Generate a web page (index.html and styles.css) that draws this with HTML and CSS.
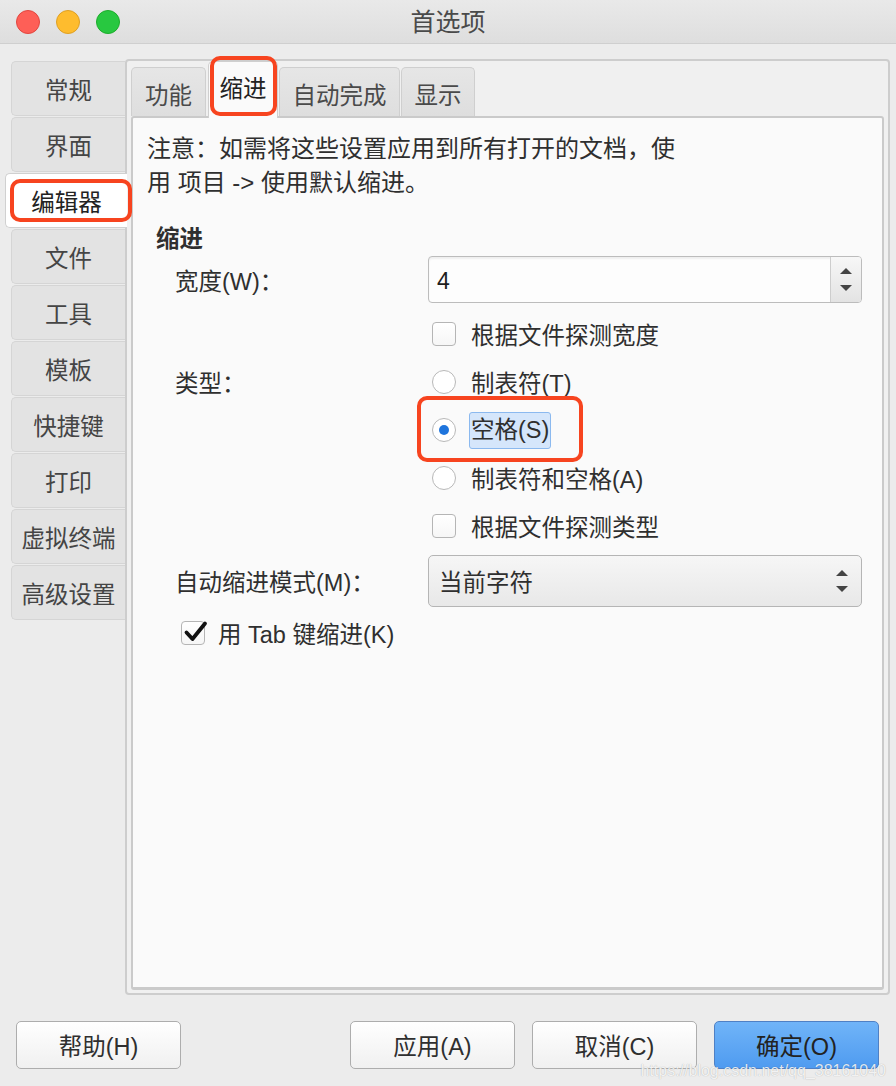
FILE: index.html
```html
<!DOCTYPE html>
<html lang="zh-CN">
<head>
<meta charset="utf-8">
<title>首选项</title>
<link rel="stylesheet" href="styles.css">
</head>
<body>
<div class="window">
  <header class="titlebar">
    <div class="lights">
      <span class="light red"></span><span class="light yellow"></span><span class="light green"></span>
    </div>
    <div class="title">首选项</div>
    <div></div>
  </header>

  <div class="main">
    <nav class="sidebar">
      <div class="stab">常规</div>
      <div class="stab">界面</div>
      <div class="stab active">编辑器<span class="mark mark-side"></span></div>
      <div class="stab">文件</div>
      <div class="stab">工具</div>
      <div class="stab">模板</div>
      <div class="stab">快捷键</div>
      <div class="stab">打印</div>
      <div class="stab">虚拟终端</div>
      <div class="stab">高级设置</div>
    </nav>

    <section class="pane">
      <div class="tabs">
        <div class="tab t-func">功能</div>
        <div class="tab t-indent active">缩进<span class="mark mark-tab"></span></div>
        <div class="tab t-auto">自动完成</div>
        <div class="tab t-show">显示</div>
      </div>
      <div class="page">
        <p class="note">注意：如需将这些设置应用到所有打开的文档，使<br>用 项目 -&gt; 使用默认缩进。</p>
        <div class="group-title">缩进</div>
        <div class="form">
          <div class="row row-spin">
            <div class="lbl">宽度(W)：</div>
            <div class="spin">
              <div class="spin-value">4</div>
              <div class="spin-btns"><span class="arr-up"></span><span class="arr-down"></span></div>
            </div>
          </div>
          <div class="row">
            <div class="lbl"></div>
            <div class="field"><span class="check"></span><span class="ctext">根据文件探测宽度</span></div>
          </div>
          <div class="row">
            <div class="lbl">类型：</div>
            <div class="field"><span class="radio"></span><span class="ctext">制表符(T)</span></div>
          </div>
          <div class="row">
            <div class="lbl"></div>
            <div class="field field-focus"><span class="radio on"></span><span class="ctext sel">空格(S)</span><span class="mark mark-radio"></span></div>
          </div>
          <div class="row">
            <div class="lbl"></div>
            <div class="field"><span class="radio"></span><span class="ctext">制表符和空格(A)</span></div>
          </div>
          <div class="row">
            <div class="lbl"></div>
            <div class="field"><span class="check"></span><span class="ctext">根据文件探测类型</span></div>
          </div>
          <div class="row row-combo">
            <div class="lbl">自动缩进模式(M)：</div>
            <div class="combo">
              <span class="combo-text">当前字符</span>
              <span class="combo-arrows"><span class="arr-up"></span><span class="arr-down"></span></span>
            </div>
          </div>
          <div class="row row-tab">
            <span class="check checked"><svg viewBox="0 0 26 26" width="26" height="26"><path d="M4.5 13.5 L10.5 20 L23 4.5" fill="none" stroke="#111" stroke-width="3.8" stroke-linecap="round" stroke-linejoin="round"/></svg></span>
            <span class="ctext tabtext">用 Tab 键缩进(K)</span>
          </div>
        </div>
      </div>
    </section>
  </div>

  <footer class="buttons">
    <button class="btn">帮助(H)</button>
    <button class="btn push">应用(A)</button>
    <button class="btn">取消(C)</button>
    <button class="btn primary">确定(O)</button>
  </footer>

  <div class="watermark">https://blog.csdn.net/qq_38161040</div>
</div>
</body>
</html>
```

FILE: styles.css
```css
* { box-sizing: border-box; }
html, body {
  margin: 0;
  padding: 0;
  background: #ececec;
}
body {
  font-family: "Liberation Sans", "Noto Sans CJK SC", sans-serif;
  color: #2f2f2f;
}
.window {
  position: relative;
  width: 896px;
  height: 1086px;
  background: #ececec;
  overflow: hidden;
}

/* title bar */
.titlebar {
  height: 44px;
  display: grid;
  grid-template-columns: 1fr auto 1fr;
  align-items: center;
  background: linear-gradient(#e9e9e9, #dedede);
  border-bottom: 1px solid #cfcfcf;
}
.lights {
  display: flex;
  gap: 16px;
  padding-left: 16px;
}
.light {
  width: 24px;
  height: 24px;
  border-radius: 50%;
  display: block;
}
.red { background: #fe5f57; border: 1px solid #e2463f; }
.yellow { background: #febc2e; border: 1px solid #dfa023; }
.green { background: #28c840; border: 1px solid #1dad2b; }
.title {
  font-size: 25px;
  color: #4a4a4a;
  line-height: 44px;
}

/* main */
.main {
  display: flex;
  padding: 15px 6px 0 11px;
  height: 951px;
}
.sidebar {
  width: 114px;
  flex: none;
  padding-top: 2px;
  display: flex;
  flex-direction: column;
  gap: 1px;
}
.stab {
  position: relative;
  height: 55px;
  background: #e3e3e3;
  border: 1px solid #d5d5d5;
  border-right: none;
  border-radius: 5px 0 0 5px;
  display: flex;
  align-items: center;
  justify-content: center;
  font-size: 23.5px;
  color: #454545;
}
.stab.active {
  background: #ffffff;
  margin-left: -6px;
  margin-right: -2px;
  z-index: 2;
  color: #222;
  border-color: #d0d0d0;
}

.mark {
  position: absolute;
  border: 4px solid #f7441f;
  border-radius: 10px;
  pointer-events: none;
  z-index: 5;
}
.mark-side { left: 4px; top: 5px; width: 122px; height: 43px; }
.mark-tab { left: 1px; top: -6px; width: 67px; height: 60px; }
.mark-radio { left: -11px; top: -10px; width: 166px; height: 66px; }

/* pane */
.pane {
  flex: 1;
  height: 936px;
  border: 2px solid #cdcdcd;
  border-radius: 4px;
  background: #f0f0f0;
  padding: 6px 4px 3px 4px;
  display: flex;
  flex-direction: column;
}
.tabs {
  display: flex;
  align-items: flex-end;
  gap: 2px;
  height: 49px;
  flex: none;
}
.tab {
  position: relative;
  height: 49px;
  background: linear-gradient(#e6e6e6, #dedede);
  border: 1px solid #cfcfcf;
  border-bottom: none;
  border-radius: 5px 5px 0 0;
  display: flex;
  align-items: center;
  justify-content: center;
  padding-top: 3px;
  font-size: 23.5px;
  color: #4a4a4a;
}
.t-func { width: 75px; }
.t-indent { width: 70px; }
.t-auto { width: 121px; margin-left: -1px; }
.t-show { width: 74px; margin-left: -1px; }
.tab.active {
  height: 57px;
  margin-bottom: -2px;
  background: #fafafa;
  z-index: 2;
  padding-top: 0;
  padding-bottom: 6px;
  color: #222;
}
.page {
  flex: 1;
  background: #fafafa;
  border: 2px solid #cacaca;
  border-bottom-width: 3px;
  border-radius: 3px;
  padding: 14px 0 0 14px;
}
.note {
  margin: 0;
  font-size: 24px;
  line-height: 34px;
}
.group-title {
  margin-top: 22px;
  margin-bottom: -2px;
  padding-left: 9px;
  font-size: 23.5px;
  line-height: 34px;
  font-weight: 700;
}
.form {
  padding-left: 28px;
  display: flex;
  flex-direction: column;
}
.row {
  display: flex;
  align-items: center;
  height: 48px;
  font-size: 23.5px;
}
.row-spin { height: 47px; margin-top: 2px; margin-bottom: 7px; }
.row-combo { height: 52px; margin-top: 5px; margin-bottom: 2px; }
.lbl {
  width: 253px;
  flex: none;
}
.field {
  position: relative;
  display: flex;
  align-items: center;
  padding-left: 4px;
  height: 48px;
}
.ctext { margin-left: 15px; }
.ctext.sel {
  margin-left: 13px;
  background: #d5e6fb;
  border: 1px solid #8bb9ef;
  border-radius: 3px;
  padding: 0 1px;
  line-height: 35px;
}

/* spin box */
.spin {
  width: 434px;
  height: 47px;
  border: 1px solid #bcbcbc;
  border-radius: 4px;
  display: flex;
  overflow: hidden;
  background: #fdfdfd;
  box-shadow: inset 0 2px 2px rgba(0,0,0,0.06);
}
.spin-value {
  flex: 1;
  padding-left: 8px;
  padding-top: 4px;
  display: flex;
  align-items: center;
  font-size: 23px;
  color: #1e1e1e;
}
.spin-btns {
  width: 31px;
  border-left: 1px solid #cdcdcd;
  background: linear-gradient(#f7f7f7, #e3e3e3);
  display: flex;
  flex-direction: column;
  align-items: center;
  justify-content: center;
  gap: 11px;
}
.arr-up, .arr-down {
  display: block;
  width: 0;
  height: 0;
  border-left: 6px solid transparent;
  border-right: 6px solid transparent;
}
.arr-up { border-bottom: 6px solid #444; }
.arr-down { border-top: 6px solid #444; }

/* checkbox & radio */
.check {
  position: relative;
  width: 24px;
  height: 24px;
  flex: none;
  border: 1px solid #b5b5b5;
  border-radius: 4px;
  background: linear-gradient(#ffffff, #f6f6f6);
}
.check svg {
  position: absolute;
  left: 0;
  top: -3px;
  display: block;
}
.radio {
  width: 24px;
  height: 24px;
  flex: none;
  border: 1px solid #b8b8b8;
  border-radius: 50%;
  background: #ffffff;
  display: flex;
  align-items: center;
  justify-content: center;
}
.radio.on::after {
  content: "";
  width: 10px;
  height: 10px;
  border-radius: 50%;
  background: #1f75dd;
}

/* combo */
.combo {
  width: 434px;
  height: 52px;
  border: 1px solid #b5b5b5;
  border-radius: 5px;
  background: linear-gradient(#f6f6f6, #e8e8e8);
  display: flex;
  align-items: center;
  justify-content: space-between;
  padding: 0 13px 0 10px;
}
.combo-arrows {
  display: flex;
  flex-direction: column;
  align-items: center;
  gap: 10px;
}

.row-tab { padding-left: 6px; }
.tabtext { margin-left: 13px; }

/* buttons */
.buttons {
  display: flex;
  padding: 26px 17px 0 16px;
  gap: 17px;
}
.btn {
  width: 165px;
  height: 48px;
  border: 1px solid #adadad;
  border-radius: 5px;
  background: linear-gradient(#ffffff, #f0f0f0);
  font-family: "Liberation Sans", "Noto Sans CJK SC", sans-serif;
  font-size: 23.5px;
  color: #2f2f2f;
  padding: 0;
}
.btn.push { margin-left: auto; }
.btn.primary {
  background: linear-gradient(#70b4f8, #4f9bf0);
  border-color: #4f80c4;
  color: #222;
}

.watermark {
  position: absolute;
  right: 10px;
  bottom: 6px;
  font-family: "Liberation Sans", Arial, sans-serif;
  font-size: 16px;
  color: rgba(255,255,255,0.85);
  text-shadow: 0 0 1px rgba(0,0,0,0.3);
}
```
